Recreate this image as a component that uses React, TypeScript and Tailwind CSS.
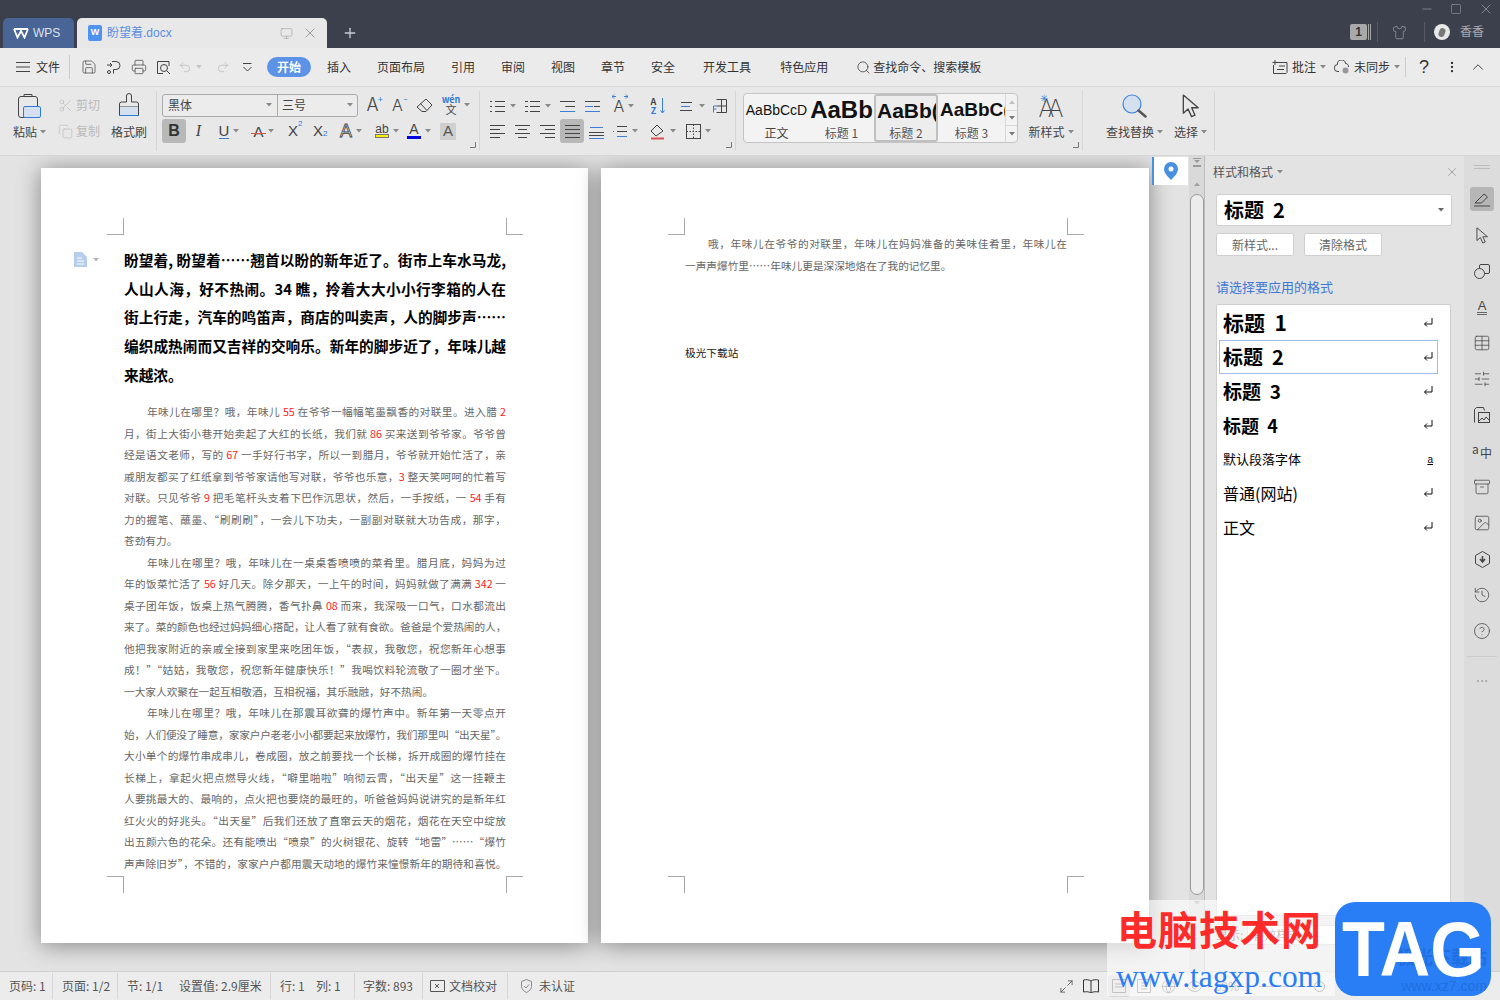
import React from 'react';
import {
  Archive, ChevronUp, CircleHelp, Copy, Ellipsis, Eye, Globe, History, Image, Maximize2, Minus, Monitor,
  Plus, Printer, Redo2, Save, Scissors, Search, Shirt, SlidersHorizontal, Square, Table, Undo2, X,
} from 'lucide-react';

const Caret = ({ className = 'text-[#8a8a8a]' }: { className?: string }) => (
  <svg width="6" height="4" viewBox="0 0 6 4" className={className}>
    <path d="M0 0h6L3 3.5z" fill="currentColor" />
  </svg>
);

const Corner = () => (
  <svg width="6" height="6" viewBox="0 0 6 6" className="absolute right-[3px] bottom-[3px] text-[#777]">
    <path d="M5.5 0v5.5H0" fill="none" stroke="currentColor" />
  </svg>
);

const Cell = ({ className, children }: { className: string; children: React.ReactNode }) => (
  <div className={'flex items-center justify-center gap-[4px] shrink-0 ' + className}>{children}</div>
);

const Arrow = ({ size }: { size: number }) => (
  <svg width={size * 0.72} height={size} viewBox="0 0 13 18" fill="none" stroke="#444" strokeLinejoin="round">
    <path d="M1 .8v13.6l3.6-3.2 2.6 5.8 2.6-1.1-2.5-5.6h4.900z" />
  </svg>
);

const Lines = ({ rows, blue = 0 }: { rows: number[][]; blue?: number }) => (
  <svg width="17" height="16" viewBox="0 0 17 16" fill="none" stroke="#444">
    {rows.map((r, i) => (
      <path key={i} d={'M' + r[0] + ' ' + (r[2] + 0.5) + 'H' + r[1]} stroke={blue && i % 2 ? '#3b7fd9' : '#444'} />
    ))}
  </svg>
);

const PasteIcon = () => (
  <svg width="26" height="27" viewBox="0 0 26 27" fill="none">
    <rect x="1.5" y="3.5" width="19" height="21" rx="2.5" stroke="#444" />
    <path d="M7 3.5V1.500h8v2" stroke="#444" />
    <rect x="6.5" y="13.5" width="17" height="11" rx="1.5" fill="#d5e0ee" stroke="#2f7ad8" />
  </svg>
);

const BrushIcon = () => (
  <svg width="24" height="24" viewBox="0 0 24 24" fill="none">
    <path d="M9.5 9V3a2.500 2.500 0 0 1 5 0v6" stroke="#444" />
    <path d="M9.5 9H4.500a2 2 0 0 0-2 2v3h19v-3a2 2 0 0 0-2-2h-5" stroke="#444" />
    <rect x="2.5" y="14" width="19" height="8.5" fill="#d5e0ee" />
    <path d="M2.5 14v8.500h19V14" stroke="#444" />
    <path d="M2 22.5h20" stroke="#2f7ad8" />
  </svg>
);

const Ribbon = () => (
  <div className="flex h-[68px] bg-[#e8e8e8] text-[12px] text-[#444] shrink-0">
    <div className="flex w-[157px] pl-[11px] border-r border-[#d6d6d6] my-[4px] shrink-0">
      <div className="w-[37px] flex flex-col items-center">
        <div className="mt-[2px] h-[28px]"><PasteIcon /></div>
        <div className="mt-[2px] flex items-center gap-[3px] whitespace-nowrap">粘贴<Caret /></div>
      </div>
      <div className="ml-[10px] w-[46px] flex flex-col text-[#b9b9b9]">
        <div className="mt-[1px] h-[26px] flex items-center gap-[3px] whitespace-nowrap"><Scissors size={15} strokeWidth={1} />剪切</div>
        <div className="h-[26px] flex items-center gap-[3px] whitespace-nowrap"><Copy size={15} strokeWidth={1} />复制</div>
      </div>
      <div className="ml-[6px] w-[38px] flex flex-col items-center">
        <div className="mt-[2px] h-[28px]"><BrushIcon /></div>
        <div className="mt-[2px] whitespace-nowrap">格式刷</div>
      </div>
    </div>

    <div className="relative w-[323px] pl-[5px] border-r border-[#d6d6d6] my-[4px] shrink-0">
      <div className="flex items-center h-[24px] mt-[2px]">
        <div className="flex w-[196px] h-[23px] border border-[#aaaaaa] rounded-[3px] bg-[#ececec]">
          <div className="w-[115px] flex items-center justify-between px-[5px] border-r border-[#aaaaaa]">黑体<Caret /></div>
          <div className="flex-1 flex items-center justify-between px-[4px]">三号<Caret /></div>
        </div>
        <Cell className="w-[25px] ml-[2px] text-[18px] leading-none"><span className="relative font-['Inter',sans-serif] font-light">A<span className="absolute -top-[3px] -right-[5px] text-[10px] text-[#2f7ad8]">+</span></span></Cell>
        <Cell className="w-[25px] text-[16px] leading-none"><span className="relative font-['Inter',sans-serif] font-light">A<span className="absolute -top-[3px] -right-[5px] text-[10px] text-[#2f7ad8]">-</span></span></Cell>
        <Cell className="w-[29px]">
          <svg width="17" height="15" viewBox="0 0 17 15" fill="none" stroke="#444"><path d="M10 1l6 6-6 6.500H6L1 9z" /><path d="M4.500 5.500l6 6.500" /></svg>
        </Cell>
        <Cell className="w-[34px]">
          <div className="flex flex-col items-center leading-none text-[9px]"><span className="text-[#2f7ad8] font-bold">wén</span><span className="text-[11px]">文</span></div>
          <Caret />
        </Cell>
      </div>
      <div className="flex items-center h-[24px] mt-[2px] font-['Liberation_Sans',sans-serif]">
        <Cell className="w-[24px] h-[24px] rounded-[3px] bg-[#b8b8b8] text-[16px] font-bold text-[#333]">B</Cell>
        <Cell className="w-[25px] text-[16px] italic font-['Liberation_Serif',serif]">I</Cell>
        <Cell className="w-[36px]"><span className="text-[15px] leading-[15px] border-b border-[#3b7fd9]">U</span><Caret /></Cell>
        <Cell className="w-[33px]"><span className="relative text-[15px] leading-[15px]">A<span className="absolute left-[-2px] right-[-2px] top-[9px] h-px bg-[#d9534f]"></span></span><Caret /></Cell>
        <Cell className="w-[26px] text-[15px]"><span className="relative">X<span className="absolute -top-[2px] left-[10px] text-[8px] text-[#2f7ad8]">2</span></span></Cell>
        <Cell className="w-[24px] text-[15px]"><span className="relative">X<span className="absolute top-[8px] left-[10px] text-[8px] text-[#2f7ad8]">2</span></span></Cell>
        <Cell className="w-[42px]"><span className="text-[18px] leading-none text-[#e8e8e8] [-webkit-text-stroke:0.8px_#444]">A</span><Caret /></Cell>
        <Cell className="w-[30px]"><span className="flex flex-col items-center text-[12px] leading-[10px] underline">ab<span className="w-[14px] h-[4px] bg-[#ffee00] border border-[#777]"></span></span><Caret /></Cell>
        <Cell className="w-[34px]"><span className="flex flex-col items-center text-[14px] leading-[13px]">A<span className="w-[14px] h-[3px] bg-[#0000e0]"></span></span><Caret /></Cell>
        <Cell className="w-[16px] h-[17px] ml-[4px] bg-[#cfcfcf] text-[15px] text-[#555]">A</Cell>
      </div>
      <Corner />
    </div>

    <div className="relative w-[256px] pl-[5px] border-r border-[#d6d6d6] my-[4px] shrink-0 text-[#444]">
      <div className="flex items-center h-[24px] mt-[3px]">
        <Cell className="w-[35px]"><Lines rows={[[6, 16, 3], [6, 16, 8], [6, 16, 13], [1, 3, 3], [1, 3, 8], [1, 3, 13]]} /><Caret /></Cell>
        <Cell className="w-[35px]"><Lines rows={[[6, 16, 3], [6, 16, 8], [6, 16, 13], [1, 4, 3], [1, 4, 8], [1, 4, 13]]} /><Caret /></Cell>
        <Cell className="w-[25px]"><Lines blue={1} rows={[[1, 16, 3], [6, 11, 8], [7, 16, 8], [1, 16, 13]]} /></Cell>
        <Cell className="w-[25px]"><Lines blue={1} rows={[[1, 16, 3], [1, 9, 8], [10, 16, 8], [1, 16, 13]]} /></Cell>
        <Cell className="w-[38px]">
          <span className="relative text-[16px] leading-none font-['Inter',sans-serif] font-light">
            A
            <svg width="16" height="5" viewBox="0 0 16 5" fill="none" stroke="#3b7fd9" className="absolute -top-[4px] -left-[2px]"><path d="M0 2.500h4M12 2.500h4M2 .5L0 2.500l2 2M14 .5l2 2-2 2" /></svg>
          </span>
          <Caret />
        </Cell>
        <Cell className="w-[30px] gap-[2px] text-[9px] leading-[9px] font-bold">
          <span className="text-center">A<br /><span className="text-[#2f7ad8]">Z</span></span>
          <svg width="5" height="16" viewBox="0 0 5 16" fill="none" stroke="#3b7fd9"><path d="M2.500 0v15M.5 12.500l2 2.500 2-2.500" /></svg>
        </Cell>
        <Cell className="w-[37px]"><Lines blue={1} rows={[[3, 14, 4], [3, 12, 8], [2, 14, 12]]} /><Caret /></Cell>
        <Cell className="w-[20px]">
          <svg width="16" height="16" viewBox="0 0 16 16" fill="none"><path d="M4.500 1.500h10v13h-10M9.500 1.500v13M4.500 8h10" stroke="#444" /><path d="M1.500 8v6.500M1.500 8h3M1.500 11h3" stroke="#3b7fd9" /></svg>
        </Cell>
      </div>
      <div className="flex items-center h-[24px] mt-[1px]">
        <Cell className="w-[25px]"><Lines rows={[[1, 16, 2], [1, 11, 6], [1, 16, 10], [1, 11, 14]]} /></Cell>
        <Cell className="w-[25px]"><Lines rows={[[1, 16, 2], [4, 13, 6], [1, 16, 10], [4, 13, 14]]} /></Cell>
        <Cell className="w-[25px]"><Lines rows={[[1, 16, 2], [6, 16, 6], [1, 16, 10], [6, 16, 14]]} /></Cell>
        <Cell className="w-[24px] h-[24px] rounded-[3px] bg-[#b8b8b8]"><Lines rows={[[1, 16, 2], [1, 16, 6], [1, 16, 10], [1, 16, 14]]} /></Cell>
        <Cell className="w-[25px]"><Lines blue={1} rows={[[1, 16, 9], [2, 15, 4], [1, 16, 12], [1, 16, 15]]} /></Cell>
        <Cell className="w-[30px]"><Lines blue={1} rows={[[6, 16, 3], [2, 3, 8], [6, 16, 8], [6, 16, 13]]} /><Caret /></Cell>
        <Cell className="w-[46px]">
          <svg width="17" height="17" viewBox="0 0 17 17" fill="none" stroke="#444"><path d="M8 2L2 8l5 5 7-5z" /><path d="M2 15.500h13" stroke="#d9534f" strokeWidth="2" /></svg>
          <Caret />
        </Cell>
        <Cell className="w-[26px]">
          <svg width="15" height="15" viewBox="0 0 15 15" fill="none" stroke="#444"><rect x=".5" y=".5" width="14" height="14" /><path d="M7.500 .5v14M.5 7.500h14" strokeDasharray="1.500 1.500" /></svg>
          <Caret />
        </Cell>
      </div>
      <Corner />
    </div>

    <div className="relative w-[347px] pl-[7px] border-r border-[#d6d6d6] my-[4px] flex shrink-0">
      <div className="flex w-[275px] h-[50px] mt-[2px] border border-[#c4c4c4] rounded-[4px] bg-[#f3f3f3] overflow-hidden font-['Liberation_Sans',sans-serif]">
        <div className="w-[65px] flex flex-col items-center overflow-hidden">
          <div className="h-[32px] flex items-center text-[14px] text-[#111] whitespace-nowrap">AaBbCcD</div>
          <div className="text-[12px] leading-[14px] font-['Noto_Sans_CJK_SC',sans-serif]">正文</div>
        </div>
        <div className="w-[65px] flex flex-col items-center overflow-hidden">
          <div className="h-[32px] flex items-center text-[24px] font-bold text-[#111] whitespace-nowrap">AaBb</div>
          <div className="text-[12px] leading-[14px] text-[#555] font-['Noto_Sans_CJK_SC',sans-serif]">标题 1</div>
        </div>
        <div className="w-[64px] flex flex-col items-center overflow-hidden border-2 border-[#c0c0c0] rounded-[3px] bg-[#ededed]">
          <div className="h-[30px] w-full flex items-center pl-[1px] text-[21px] font-bold text-[#111] whitespace-nowrap">AaBb(</div>
          <div className="text-[12px] leading-[14px] text-[#555] font-['Noto_Sans_CJK_SC',sans-serif]">标题 2</div>
        </div>
        <div className="w-[67px] flex flex-col items-center overflow-hidden">
          <div className="h-[32px] w-full flex items-center pl-[2px] text-[19px] font-bold text-[#111] whitespace-nowrap">AaBbC(</div>
          <div className="text-[12px] leading-[14px] text-[#555] font-['Noto_Sans_CJK_SC',sans-serif]">标题 3</div>
        </div>
        <div className="flex-1 flex flex-col border-l border-[#d8d8d8] text-[#999] items-center">
          <div className="h-[16px] flex items-center"><Caret className="rotate-180 text-[#c0c0c0]" /></div>
          <div className="h-[16px] w-full flex items-center justify-center border-y border-[#d8d8d8]"><Caret className="text-[#777]" /></div>
          <div className="h-[16px] flex items-center"><Caret className="text-[#777]" /></div>
        </div>
      </div>
      <div className="ml-[10px] w-[46px] flex flex-col items-center">
        <div className="h-[27px] mt-[3px] flex items-end">
          <span className="relative text-[24px] leading-[24px] font-['Inter',sans-serif] font-extralight text-[#444] tracking-[-7px] pr-[7px]">AA<span className="absolute -top-[4px] left-[1px] text-[10px] leading-none text-[#3b7fd9]">✳</span></span>
        </div>
        <div className="mt-[2px] flex items-center gap-[3px] whitespace-nowrap">新样式<Caret /></div>
      </div>
      <Corner />
    </div>

    <div className="flex w-[132px] pl-[23px] border-r border-[#d6d6d6] my-[4px] shrink-0">
      <div className="w-[57px] flex flex-col items-center">
        <div className="h-[27px] mt-[3px]">
          <svg width="25" height="25" viewBox="0 0 25 25" fill="none"><circle cx="10" cy="10" r="9" fill="#d5e0ee" stroke="#3b87dd" strokeWidth="1.2" /><path d="M16.500 16.500l7 6" stroke="#555" strokeWidth="2.500" strokeLinecap="round" /></svg>
        </div>
        <div className="mt-[2px] flex items-center gap-[3px] whitespace-nowrap">查找替换<Caret /></div>
      </div>
      <div className="ml-[10px] w-[35px] flex flex-col items-center">
        <div className="h-[27px] mt-[3px]"><Arrow size={24} /></div>
        <div className="mt-[2px] flex items-center gap-[3px] whitespace-nowrap">选择<Caret /></div>
      </div>
    </div>
  </div>
);

const QuickIcon = ({ children }: { children: React.ReactNode }) => (
  <Cell className="w-[25px] h-[24px] text-[#444]">{children}</Cell>
);

const MenuBar = () => (
  <div className="flex items-center h-[39px] bg-[#ebebeb] border-b border-[#d9d9d9] text-[12px] text-[#333] shrink-0">
    <div className="flex items-center w-[70px] pl-[16px] h-[24px] border-r border-[#cccccc] gap-[6px] shrink-0">
      <svg width="14" height="10" viewBox="0 0 14 10" stroke="#444"><path d="M0 .5h14M0 5h14M0 9.500h14" /></svg>
      <span>文件</span>
    </div>
    <div className="flex items-center pl-[6px] shrink-0">
      <QuickIcon><Save size={16} strokeWidth={1.1} /></QuickIcon>
      <QuickIcon>
        <svg width="15" height="15" viewBox="0 0 15 15" fill="none" stroke="#444"><path d="M6 1.500h4a4 4 0 0 1 0 8H7.500v4" /><path d="M1 5h5M4 3l2 2-2 2" /><circle cx="3" cy="12" r="1.500" /></svg>
      </QuickIcon>
      <QuickIcon><Printer size={16} strokeWidth={1.1} /></QuickIcon>
      <QuickIcon>
        <svg width="15" height="15" viewBox="0 0 15 15" fill="none" stroke="#444"><path d="M13 6V1.500H1.500v12H7" /><circle cx="8" cy="8" r="3.500" /><path d="M10.500 10.500l3.500 3.500" /></svg>
      </QuickIcon>
      <Cell className="w-[25px] ml-[1px] text-[#b5b5b5]"><Undo2 size={14} strokeWidth={1.2} /><Caret className="text-[#c4c4c4]" /></Cell>
      <Cell className="w-[25px] ml-[8px] text-[#b5b5b5]"><Redo2 size={14} strokeWidth={1.2} /></Cell>
      <QuickIcon>
        <svg width="9" height="9" viewBox="0 0 9 9" fill="none" stroke="#444"><path d="M0 .5h8.500" /><path d="M.5 4l4 4 4-4" /></svg>
      </QuickIcon>
    </div>
    <div className="ml-[7px] w-[44px] h-[20px] rounded-full bg-[#5d93e6] text-white font-bold flex items-center justify-center shrink-0">开始</div>
    <nav className="flex items-center ml-[16px] gap-[26px] whitespace-nowrap shrink-0">
      <span>插入</span><span>页面布局</span><span>引用</span><span>审阅</span><span>视图</span><span>章节</span><span>安全</span>
      <span className="ml-[2px]">开发工具</span><span className="ml-[3px]">特色应用</span>
      <span className="ml-[2px] flex items-center gap-[2px]"><Search size={15} strokeWidth={1.3} className="text-[#444]" />查找命令、搜索模板</span>
    </nav>
    <div className="flex items-center ml-auto pr-[13px] shrink-0">
      <span className="flex items-center gap-[4px]">
        <svg width="16" height="14" viewBox="0 0 16 14" fill="none" stroke="#444"><path d="M4 2.500h11v10l-1 1H1.500V5" /><path d="M3 0v5M.5 2.500h5M5 9.500h7M7 6h6" /></svg>
        批注<Caret />
      </span>
      <span className="flex items-center gap-[4px] ml-[8px]">
        <svg width="16" height="14" viewBox="0 0 16 14" fill="none" stroke="#444"><path d="M5 11.500H4a3.500 3.500 0 0 1-.5-7 4 4 0 0 1 8-1 3 3 0 0 1 3 3.500" /><circle cx="11.500" cy="10.500" r="3" fill="#999" stroke="none" /></svg>
        未同步<Caret />
      </span>
      <span className="w-px h-[20px] bg-[#cccccc] ml-[5px]"></span>
      <span className="ml-[13px] text-[18px] leading-none font-['Liberation_Sans',sans-serif]">?</span>
      <span className="ml-[16px]"><Ellipsis size={14} className="rotate-90" /></span>
      <span className="ml-[10px]"><ChevronUp size={18} strokeWidth={1.2} /></span>
    </div>
  </div>
);

const TitleBar = () => (
  <div className="relative flex items-end h-[48px] bg-[#3c404d] pl-[3px] shrink-0 text-[12px] font-['Liberation_Sans','Noto_Sans_CJK_SC',sans-serif]">
    <div className="flex items-center gap-[4px] w-[71px] h-[30px] pl-[10px] rounded-t-[5px] bg-[#486596] text-[#d9e2f0]">
      <svg width="16" height="11" viewBox="0 0 16 11" fill="none" stroke="#fff" strokeWidth="1.8"><path d="M1 1l3.500 8.500L8 3l3.500 6.500L15 1M1 1h14" /></svg>
      WPS
    </div>
    <div className="flex items-center w-[250px] h-[30px] ml-[3px] pl-[11px] pr-[9px] rounded-t-[5px] bg-[#e8e8e8]">
      <span className="flex items-center justify-center w-[14px] h-[16px] rounded-[2px] bg-[#4f93f0] text-white text-[9px] font-bold">W</span>
      <span className="ml-[5px] text-[#5b8fe0]">盼望着.docx</span>
      <Monitor size={13} strokeWidth={1} className="ml-auto text-[#999]" />
      <X size={16} strokeWidth={1} className="ml-[9px] text-[#777]" />
    </div>
    <Plus size={16} strokeWidth={2} className="ml-[15px] mb-[7px] text-[#c9ccd3]" />

    <div className="absolute right-[6px] top-[1px] flex items-center gap-[16px] text-[#a8abb3]">
      <Minus size={14} strokeWidth={1} />
      <Square size={12} strokeWidth={1} />
      <X size={16} strokeWidth={1} />
    </div>
    <div className="flex items-center ml-auto mb-[6px] pr-[16px] text-[#a8abb3]">
      <span className="flex items-center justify-center w-[17px] h-[16px] rounded-[2px] bg-[#a9a9a9] text-[#333] font-bold">1</span>
      <span className="w-[3px] h-[16px] border-x border-[#a9a9a9] ml-[1px]"></span>
      <span className="w-px h-[20px] bg-[#555964] ml-[6px]"></span>
      <Shirt size={15} strokeWidth={1} className="ml-[14px]" />
      <span className="w-px h-[20px] bg-[#555964] ml-[17px]"></span>
      <span className="ml-[9px] flex items-center justify-center w-[16px] h-[16px] rounded-full bg-[#e8e8e8]"><span className="w-[6px] h-[9px] rounded-full bg-[#777] rotate-[20deg]"></span></span>
      <span className="ml-[10px]">香香</span>
    </div>
  </div>
);

type L = { t: string; last?: boolean; indent?: boolean; tight?: boolean; raw?: boolean };

// full-width punctuation for the Chinese body text
const fw = (s: string) => s.replace(/,/g, '\uFF0C').replace(/\?/g, '\uFF1F').replace(/!/g, '\uFF01');

const heading: L[] = [
  { t: '盼望着, 盼望着……翘首以盼的新年近了。街市上车水马龙,', raw: true },
  { t: '人山人海,好不热闹。34 瞧,拎着大大小小行李箱的人在' },
  { t: '街上行走,汽车的鸣笛声,商店的叫卖声,人的脚步声……' },
  { t: '编织成热闹而又吉祥的交响乐。新年的脚步近了,年味儿越' },
  { t: '来越浓。', last: true },
];

const body: L[] = [
  { t: '年味儿在哪里?哦,年味儿 55 在爷爷一幅幅笔墨飘香的对联里。进入腊 2', indent: true },
  { t: '月,街上大街小巷开始卖起了大红的长纸,我们就 86 买来送到爷爷家。爷爷曾' },
  { t: '经是语文老师,写的 67 一手好行书字,所以一到腊月,爷爷就开始忙活了,亲' },
  { t: '戚朋友都买了红纸拿到爷爷家请他写对联,爷爷也乐意,3 整天笑呵呵的忙着写' },
  { t: '对联。只见爷爷 9 把毛笔杆头支着下巴作沉思状,然后,一手按纸,一 54 手有' },
  { t: '力的握笔、蘸墨、“刷刷刷”,一会儿下功夫,一副副对联就大功告成,那字,' },
  { t: '苍劲有力。', last: true },
  { t: '年味儿在哪里?哦,年味儿在一桌桌香喷喷的菜肴里。腊月底,妈妈为过', indent: true },
  { t: '年的饭菜忙活了 56 好几天。除夕那天,一上午的时间,妈妈就做了满满 342 一' },
  { t: '桌子团年饭,饭桌上热气腾腾,香气扑鼻 08 而来,我深吸一口气,口水都流出' },
  { t: '来了。菜的颜色也经过妈妈细心搭配,让人看了就有食欲。爸爸是个爱热闹的人,', tight: true },
  { t: '他把我家附近的亲戚全接到家里来吃团年饭,“表叔,我敬您,祝您新年心想事' },
  { t: '成!”“姑姑,我敬您,祝您新年健康快乐!”我喝饮料轮流敬了一圈才坐下。' },
  { t: '一大家人欢聚在一起互相敬酒,互相祝福,其乐融融,好不热闹。', last: true },
  { t: '年味儿在哪里?哦,年味儿在那震耳欲聋的爆竹声中。新年第一天零点开', indent: true },
  { t: '始,人们便没了睡意,家家户户老老小小都要起来放爆竹,我们那里叫“出天星”。', tight: true },
  { t: '大小单个的爆竹串成串儿,卷成圈,放之前要找一个长梯,拆开成圈的爆竹挂在' },
  { t: '长梯上,拿起火把点燃导火线,“噼里啪啦”响彻云霄,“出天星”这一挂鞭主' },
  { t: '人要挑最大的、最响的,点火把也要烧的最旺的,听爸爸妈妈说讲究的是新年红' },
  { t: '红火火的好兆头。“出天星”后我们还放了直窜云天的烟花,烟花在天空中绽放' },
  { t: '出五颜六色的花朵。还有能喷出“喷泉”的火树银花、旋转“地雷”……“爆竹' },
  { t: '声声除旧岁”,不错的,家家户户都用震天动地的爆竹来憧憬新年的期待和喜悦。', tight: true },
];

const Digits = ({ t }: { t: string }) => (
  <>
    {fw(t).split(/(\d+)/).map((p, i) =>
      /^\d+$/.test(p) ? <span key={i} className="text-[#ff1a1a]">{p}</span> : <span key={i}>{p}</span>
    )}
  </>
);

const BodyLine = ({ l }: { l: L }) => (
  <div
    className={
      'h-[21.5px] leading-[21.5px] whitespace-nowrap text-[10.67px] text-[#666] ' +
      (l.indent ? 'pl-[23px] ' : '') +
      (l.tight ? 'tracking-[-0.35px] ' : '') +
      (l.last ? '' : 'text-justify [text-align-last:justify]')
    }
  >
    <Digits t={l.t} />
  </div>
);

const CropMarks = ({ left, right }: { left: string; right: string }) => (
  <>
    <span className={'absolute top-[50px] w-[17px] h-[17px] border-r border-b border-[#a8a8a8] ' + left}></span>
    <span className={'absolute top-[50px] w-[17px] h-[17px] border-l border-b border-[#a8a8a8] ' + right}></span>
    <span className={'absolute top-[708px] w-[17px] h-[17px] border-r border-t border-[#a8a8a8] ' + left}></span>
    <span className={'absolute top-[708px] w-[17px] h-[17px] border-l border-t border-[#a8a8a8] ' + right}></span>
  </>
);

const DocArea = () => (
  <div className="relative flex w-[1189px] shrink-0 overflow-hidden bg-[#e3e3e3] pt-[12px] pl-[41px] gap-[13px]">
    <div className="relative w-[547px] h-[775px] shrink-0 bg-white pt-[78px] pl-[83px] pr-[82px] shadow-[0_2px_22px_rgba(0,0,0,0.42)]">
      <CropMarks left="left-[66px]" right="left-[465px]" />
      <div className="absolute left-[33px] top-[84px] flex items-center gap-[6px]">
        <svg width="13" height="15" viewBox="0 0 13 15"><path d="M0 0h8l5 5v10H0z" fill="#b7cdec" /><path d="M3 6h5M3 9h7M3 12h7" stroke="#fff" /></svg>
        <Caret className="text-[#b5b5b5]" />
      </div>
      {heading.map((l, i) => (
        <div
          key={i}
          className={
            'h-[28.7px] leading-[28.7px] whitespace-nowrap text-[14.67px] font-bold text-black ' +
            (l.last ? '' : 'text-justify [text-align-last:justify]')
          }
        >
          {l.raw ? l.t : fw(l.t)}
        </div>
      ))}
      <div className="mt-[12px]">
        {body.map((l, i) => <BodyLine key={i} l={l} />)}
      </div>
    </div>

    <div className="relative w-[548px] h-[775px] shrink-0 bg-white pt-[65px] pl-[84px] pr-[82px] shadow-[0_2px_22px_rgba(0,0,0,0.42)]">
      <CropMarks left="left-[67px]" right="left-[466px]" />
      <BodyLine l={{ t: '哦,年味儿在爷爷的对联里,年味儿在妈妈准备的美味佳肴里,年味儿在', indent: true }} />
      <BodyLine l={{ t: '一声声爆竹里……年味儿更是深深地烙在了我的记忆里。', last: true }} />
      <div className="mt-[66px] h-[21.5px] leading-[21.5px] text-[10.67px] text-[#222]">极光下载站</div>
    </div>

    <div className="absolute right-[1px] top-[1px] w-[36px] h-[28px] bg-white border-l-2 border-[#4a8fe0] flex items-center justify-center">
      <svg width="14" height="18" viewBox="0 0 14 18"><path d="M7 0a7 7 0 0 1 7 7c0 4-4 8-7 11-3-3-7-7-7-11a7 7 0 0 1 7-7z" fill="#4a8fe0" /><circle cx="7" cy="7" r="2.500" fill="#fff" /></svg>
    </div>
  </div>
);

const ScrollColumn = () => (
  <div className="flex flex-col items-center w-[15px] bg-[#d9d9d9] shrink-0 text-[#9a9a9a]">
    <svg width="8" height="9" viewBox="0 0 8 9" className="mt-[2px]" fill="currentColor"><path d="M0 0h8v1H0zM1 2h6L4 5zM0 7h8v2H0z" /></svg>
    <Caret className="mt-[15px] rotate-180 text-[#a0a0a0]" />
    <div className="mt-[8px] w-[14px] h-[701px] rounded-full border border-[#9a9a9a] bg-[#ececec]"></div>
    <Caret className="mt-[6px] text-[#a0a0a0]" />
  </div>
);

const styleRows = [
  { t: '标题', n: '1', c: 'text-[21px] font-bold', h: true },
  { t: '标题', n: '2', c: 'text-[20px] font-bold', h: true, on: true },
  { t: '标题', n: '3', c: 'text-[19px] font-bold', h: true },
  { t: '标题', n: '4', c: 'text-[18px] font-bold', h: true },
  { t: '默认段落字体', n: '', c: 'text-[13px]', a: true },
  { t: '普通(网站)', n: '', c: 'text-[16px]' },
  { t: '正文', n: '', c: 'text-[16px]' },
];

const StylesPanel = () => (
  <div className="flex flex-col w-[260px] shrink-0 bg-[#e3e3e3] border-l border-[#bdbdbd] px-[11px]">
    <div className="flex items-center h-[29px] mt-[1px] text-[12px] text-[#555] gap-[4px]">
      <span className="-ml-[3px]">样式和格式</span><Caret />
      <X size={14} strokeWidth={1} className="ml-auto mr-[-6px] text-[#777]" />
    </div>
    <div className="flex items-center justify-between h-[32px] mt-[8px] w-[236px] px-[7px] bg-white border border-[#cfcfcf] rounded-[2px] text-[20px] font-bold text-black">
      <span className="whitespace-pre">标题  2</span><Caret className="text-[#666]" />
    </div>
    <div className="flex gap-[10px] mt-[7px] text-[12px] text-[#666]">
      <div className="flex items-center justify-center w-[78px] h-[23px] bg-white border border-[#cfcfcf] rounded-[2px]">新样式...</div>
      <div className="flex items-center justify-center w-[78px] h-[23px] bg-white border border-[#cfcfcf] rounded-[2px]">清除格式</div>
    </div>
    <div className="mt-[21px] h-[20px] leading-[20px] text-[13px] text-[#3f78d6]">请选择要应用的格式</div>
    <div className="mt-[7px] w-[235px] h-[612px] bg-white border border-[#cfcfcf] rounded-t-[2px] pl-[2px] pt-[1px]">
      {styleRows.map((r, i) => (
        <div
          key={i}
          className={
            'flex items-center justify-between w-[219px] h-[34px] pl-[3px] pr-[4px] text-black border whitespace-pre ' +
            (r.on ? 'border-[#9dbde8] ' : 'border-transparent ') +
            r.c
          }
        >
          <span>{r.h ? r.t + '  ' + r.n : r.t}</span>
          {r.a ? (
            <span className="text-[10px] leading-[11px] underline font-['Liberation_Sans',sans-serif]">a</span>
          ) : (
            <svg width="10" height="10" viewBox="0 0 10 10" fill="none" stroke="#111"><path d="M9 0v6H1.500M4 3.500L1.500 6 4 8.500" /></svg>
          )}
        </div>
      ))}
    </div>
    <div className="flex items-center mt-[9px] text-[12px] text-[#666] gap-[4px]">
      显示:<div className="flex-1 h-[20px] bg-white border border-[#cfcfcf] pl-[4px] leading-[18px]">有效样式</div>
    </div>
  </div>
);

const railIcon = 'w-[36px] h-[36px] flex items-center justify-center text-[#444]';

const RightRail = () => (
  <div className="flex flex-col items-center w-[36px] shrink-0 bg-[#dcdcdc] pt-[9px]">
    <div className="w-[16px] h-[4px] border-y border-[#bdbdbd]"></div>
    <div className="mt-[18px] w-[24px] h-[24px] rounded-[3px] bg-[#b6b6b6] flex items-center justify-center">
      <svg width="16" height="15" viewBox="0 0 16 15" fill="none" stroke="#444"><path d="M1 11L10 2l3.500 3-6 6zM0 14h16" /></svg>
    </div>
    <div className={railIcon + ' mt-[6px]'}><Arrow size={17} /></div>
    <div className={railIcon}>
      <svg width="16" height="15" viewBox="0 0 16 15" fill="none" stroke="currentColor"><rect x="5.500" y=".5" width="10" height="9" rx="1.500" /><circle cx="5.500" cy="9.500" r="5" fill="#dcdcdc" /></svg>
    </div>
    <div className={railIcon + " flex-col leading-none text-[13px] font-['Liberation_Sans',sans-serif]"}>
      <span className="border-b-[3px] border-double border-[#666] px-[1px]">A</span>
    </div>
    <div className={railIcon}><Table size={18} strokeWidth={1} /></div>
    <div className={railIcon}><SlidersHorizontal size={18} strokeWidth={1} /></div>
    <div className={railIcon}>
      <svg width="16" height="16" viewBox="0 0 16 16" fill="none" stroke="currentColor"><path d="M.5 15.500V2.500l2-2h7l1 3" /><rect x="4.500" y="5.500" width="11" height="10" /><path d="M5 14l3-3 2 2 2-3 3 3" /></svg>
    </div>
    <div className={railIcon + ' text-[12px] leading-none gap-[1px]'}><span className="-mt-[4px]">a</span><span className="mt-[3px]">中</span></div>
    <div className={railIcon}><Archive size={18} strokeWidth={1} /></div>
    <div className={railIcon}><Image size={18} strokeWidth={1} /></div>
    <div className={railIcon}>
      <svg width="15" height="17" viewBox="0 0 15 17" fill="none" stroke="currentColor"><path d="M7.500 .5l7 4v8l-7 4-7-4v-8z" /><path d="M7.500 5v6M5 8l2.500 3L10 8" strokeWidth="1.500" /></svg>
    </div>
    <div className={railIcon}><History size={18} strokeWidth={1} /></div>
    <div className={railIcon}><CircleHelp size={18} strokeWidth={1} /></div>
    <div className="w-[30px] h-px bg-[#cccccc] mt-[7px]"></div>
    <div className="w-[36px] h-[36px] mt-[6px] flex items-center justify-center text-[#8a8a8a]"><Ellipsis size={14} strokeWidth={1} /></div>
  </div>
);

const Rule = ({ className }: { className: string }) => <span className={'w-px h-[26px] bg-[#d6d6d6] shrink-0 ' + className}></span>;

const StatusBar = () => (
  <div className="flex items-center h-[29px] bg-[#ececec] border-t border-[#cfcfcf] pl-[9px] text-[12px] text-[#555] whitespace-nowrap shrink-0">
    <span className="w-[37px]">页码: 1</span><Rule className="ml-[6px]" />
    <span className="w-[50px] ml-[9px]">页面: 1/2</span><Rule className="ml-[5px]" />
    <span className="w-[38px] ml-[9px]">节: 1/1</span>
    <span className="w-[85px] ml-[14px]">设置值: 2.9厘米</span><Rule className="ml-[6px]" />
    <span className="w-[26px] ml-[9px]">行: 1</span>
    <span className="w-[25px] ml-[10px]">列: 1</span><Rule className="ml-[13px]" />
    <span className="w-[52px] ml-[8px]">字数: 893</span><Rule className="ml-[7px]" />
    <span className="ml-[7px] flex items-center gap-[4px]">
      <svg width="15" height="12" viewBox="0 0 15 12" fill="none" stroke="#555"><path d="M.5.5H14.500V11.500H.5zM5 4l4 4M9 4L5 8" /></svg>
      文档校对
    </span>
    <Rule className="ml-[10px]" />
    <span className="ml-[13px] flex items-center gap-[7px]">
      <svg width="11" height="14" viewBox="0 0 11 14" fill="none" stroke="#888"><path d="M5.500.5l5 2v5c0 3-3 5-5 6-2-1-5-3-5-6v-5zM3 7l2 2 3-3.500" /></svg>
      未认证
    </span>
    <div className="flex items-center ml-auto pr-[15px] text-[#444]">
      <Maximize2 size={15} strokeWidth={1.2} />
      <svg width="16" height="14" viewBox="0 0 16 14" fill="none" stroke="#333" className="ml-[9px]"><path d="M8 2C6 .5 3 .5.5 1v12C3 12.500 6 12.500 8 14c2-1.500 5-1.500 7.500-1V1C13 .5 10 .5 8 2zM8 2v12" /></svg>
      <span className="ml-[9px] w-[22px] h-[22px] flex items-center justify-center rounded-[3px] bg-[#d6d6d6]"><svg width="14" height="14" viewBox="0 0 14 14" fill="none" stroke="#666"><path d="M.5.5h13v13H.5zM3 5h8M3 8h8" /></svg></span>
      <svg width="14" height="14" viewBox="0 0 14 14" fill="none" stroke="#777" className="ml-[7px]"><path d="M.5.5h13v13H.5zM4 4h6M4 7h6M4 10h6" /></svg>
      <Globe size={15} strokeWidth={1} className="ml-[10px]" />
      <Eye size={17} strokeWidth={1} className="ml-[10px]" />
      <span className="ml-[12px] text-[#777]">69%</span>
      <div className="ml-[20px] w-[66px] h-px bg-[#888] relative"><span className="absolute right-0 -top-[5px] w-[11px] h-[11px] rounded-full border border-[#666] bg-[#ececec]"></span></div>
      <Plus size={15} strokeWidth={1.2} className="ml-[119px]" />
      <Square size={14} strokeWidth={1} className="ml-[12px]" />
    </div>
  </div>
);

const Watermark = () => (
  <>
    <div className="absolute left-[1149px] top-[900px] w-[186px] h-[43px] bg-white/60"></div>
    <div className="absolute left-[1107px] top-[943px] w-[228px] h-[53px] bg-white/60"></div>
    <div className="absolute left-[1117px] top-[904px] whitespace-nowrap text-[40px] leading-[48px] font-bold tracking-[1px] text-[#ff2a2a]">电脑技术网</div>
    <div className="absolute left-[1116px] top-[959px] whitespace-nowrap text-[31.500px] leading-[36px] font-['Liberation_Serif',serif] text-[#2a7ef5]">www.tagxp.com</div>
    <div className="absolute left-[1335px] top-[902px] flex items-center justify-center w-[156px] h-[94px] rounded-[20px] bg-[#2a7ef5] overflow-hidden">
      <span className="absolute right-[4px] top-[42px] text-[18px] leading-[24px] font-bold text-[#1f6fe0]">极光下载站</span>
      <span className="absolute right-[4px] bottom-[1px] text-[14px] leading-[18px] font-['Liberation_Sans',sans-serif] text-[#1f6fe0]">www.xz7.com</span>
      <span className="relative scale-x-[0.9] text-[78px] leading-none font-bold text-white font-['Liberation_Sans',sans-serif]">TAG</span>
    </div>
  </>
);

export default function App() {
  return (
    <div className="relative flex flex-col w-[1500px] h-[1000px] overflow-hidden bg-[#e3e3e3] font-['Noto_Sans_CJK_SC','Liberation_Sans',sans-serif]">
      <TitleBar />
      <MenuBar />
      <Ribbon />
      <div className="flex flex-1 min-h-0 border-t border-[#d6d6d6] shadow-[inset_0_3px_3px_rgba(0,0,0,0.08)]">
        <DocArea />
        <ScrollColumn />
        <StylesPanel />
        <RightRail />
      </div>
      <StatusBar />
      <Watermark />
    </div>
  );
}
